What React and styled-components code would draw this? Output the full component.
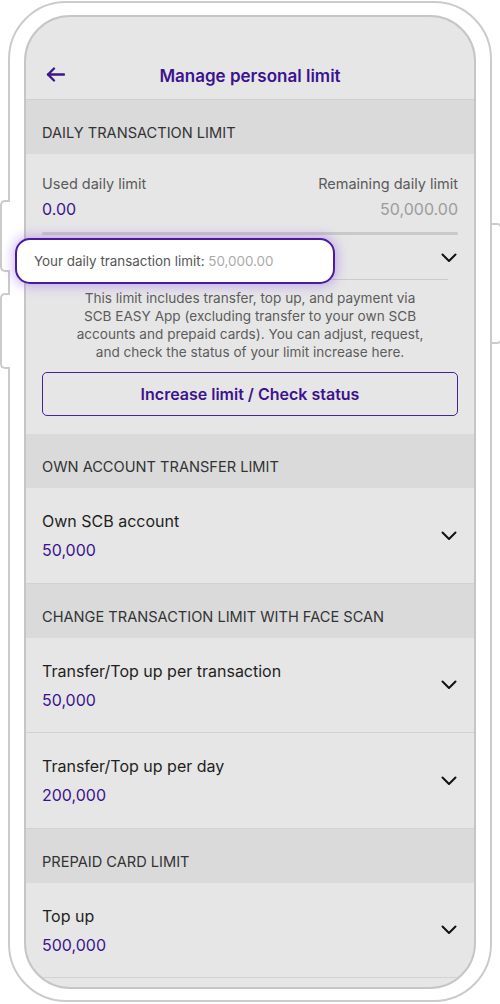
import React from 'react';
import styled, { createGlobalStyle } from 'styled-components';

const GlobalStyle = createGlobalStyle`
    html, body {
        margin: 0;
        padding: 0;
        background: #ffffff;
    }
    body {
        font-family: Inter, 'Noto Sans', Arial, sans-serif;
        -webkit-font-smoothing: antialiased;
    }
`

const Page = styled.div`
    width: 500px;
    height: 1004px;
    padding: 1px 8px 0;
    box-sizing: border-box;
    overflow: hidden;
`

const Device = styled.div`
    position: relative;
    width: 484px;
    height: 1001px;
    box-sizing: border-box;
    border: 2px solid #cbcbcb;
    border-radius: 58px;
    background: #ffffff;
    padding: 12px 14px 11px;
`

const SideButton = styled.div`
    position: absolute;
    top: ${p => p.top}px;
    height: ${p => p.h}px;
    width: 10px;
    box-sizing: border-box;
    background: #ffffff;
    border: 2px solid #cbcbcb;
    ${p => p.right ? `
        right: -12px;
        border-left: none;
        border-radius: 0 5px 5px 0;
    ` : `
        left: -10px;
        border-right: none;
        border-radius: 5px 0 0 5px;
    `}
`

const Screen = styled.div`
    height: 100%;
    box-sizing: border-box;
    border: 2px solid #c6c6c6;
    border-radius: 46px;
    background: #e6e6e6;
    overflow: hidden;
    display: flex;
    flex-direction: column;
`

const Header = styled.div`
    height: 83px;
    flex-shrink: 0;
    display: flex;
    align-items: flex-end;
    justify-content: center;
    position: relative;
    padding-bottom: 12px;
    box-sizing: border-box;
    border-bottom: 1px solid #cfcfcf;
`

const BackButton = styled.div`
    position: absolute;
    left: 20px;
    bottom: 17px;
    display: flex;
`

const Title = styled.h1`
    margin: 0;
    font-size: 17px;
    line-height: 22px;
    font-weight: 600;
    color: #3c138f;
`

const SectionHeader = styled.div`
    height: 54px;
    flex-shrink: 0;
    box-sizing: border-box;
    padding: 25px 16px 0;
    background: #dadadb;
    font-size: 14.6px;
    line-height: 16px;
    color: #333333;
    text-transform: uppercase;
`

const DailyBody = styled.div`
    padding: 21px 16px 18px;
    display: flex;
    flex-direction: column;
`

const Split = styled.div`
    display: flex;
    justify-content: space-between;
    align-items: flex-start;
`

const Stat = styled.div`
    display: flex;
    flex-direction: column;
    align-items: ${p => p.end ? 'flex-end' : 'flex-start'};
    gap: 6px;
`

const StatLabel = styled.span`
    font-size: 14.5px;
    line-height: 18px;
    color: #5a5a5a;
`

const StatValue = styled.span`
    font-size: 16px;
    line-height: 20px;
    color: ${p => p.muted ? '#9c9c9c' : '#3c138f'};
`

const Bar = styled.div`
    margin-top: 13px;
    height: 3px;
    border-radius: 2px;
    background: #c9c9c9;
`

const LimitRow = styled.div`
    margin-top: 1px;
    height: 43px;
    display: flex;
    align-items: center;
    justify-content: flex-end;
    border-bottom: 1px solid #cbcbcb;
    margin-right: 10px;
`

const ChevronSlot = styled.div`
    display: flex;
    margin-right: ${p => p.shift || 0}px;
`

const Description = styled.p`
    margin: 9px 0 0;
    text-align: center;
    font-size: 13.6px;
    line-height: 18px;
    color: #5c5c5c;
    white-space: nowrap;
`

const OutlineButton = styled.button`
    margin-top: 11px;
    height: 44px;
    width: 100%;
    background: transparent;
    border: 1.5px solid #4a1fa0;
    border-radius: 5px;
    font-family: inherit;
    font-size: 16px;
    font-weight: 600;
    color: #3c138f;
    cursor: pointer;
`

const Row = styled.div`
    display: flex;
    align-items: center;
    justify-content: space-between;
    padding: 23px 17px 22.5px 16px;
    border-bottom: 1px solid #d2d2d2;
`

const RowText = styled.div`
    display: flex;
    flex-direction: column;
    gap: 9px;
`

const RowLabel = styled.span`
    font-size: 16px;
    line-height: 20px;
    color: #1f1f1f;
`

const RowValue = styled.span`
    font-size: 16px;
    line-height: 20px;
    color: #3c138f;
`

const Callout = styled.div`
    position: absolute;
    left: 5px;
    top: 235px;
    width: 320px;
    height: 46px;
    box-sizing: border-box;
    display: flex;
    align-items: center;
    padding-left: 17px;
    background: #ffffff;
    border: 2px solid #4a1aa0;
    border-radius: 15px;
    box-shadow: 0 0 12px 2px rgba(150, 90, 235, 0.45);
    font-size: 13.4px;
    color: #555555;
    span {
        color: #aaaaaa;
    }
`

const Chevron = () => (
    <svg width="16" height="10" viewBox="0 0 16 10" fill="none">
        <polyline points="1.5,1.5 8,8 14.5,1.5" stroke="#111" strokeWidth="2" strokeLinecap="round" strokeLinejoin="round" />
    </svg>
)

const BackArrow = () => (
    <svg width="19" height="15" viewBox="0 0 19 15" fill="none">
        <line x1="18" y1="7.5" x2="2" y2="7.5" stroke="#3c138f" strokeWidth="2.3" strokeLinecap="round" />
        <polyline points="8,1.5 2,7.5 8,13.5" stroke="#3c138f" strokeWidth="2.3" strokeLinecap="round" strokeLinejoin="round" />
    </svg>
)

const descriptionLines = [
    'This limit includes transfer, top up, and payment via',
    'SCB EASY App (excluding transfer to your own SCB',
    'accounts and prepaid cards). You can adjust, request,',
    'and check the status of your limit increase here.',
]

const sections = [
    {
        title: 'Own account transfer limit',
        rows: [{ label: 'Own SCB account', value: '50,000' }],
    },
    {
        title: 'Change transaction limit with face scan',
        rows: [
            { label: 'Transfer/Top up per transaction', value: '50,000' },
            { label: 'Transfer/Top up per day', value: '200,000' },
        ],
    },
    {
        title: 'Prepaid card limit',
        rows: [{ label: 'Top up', value: '500,000' }],
    },
]

export default function App() {
    return (
        <Page>
            <GlobalStyle />
            <Device>
                <SideButton top={197} h={72} />
                <SideButton top={290} h={76} />
                <SideButton right top={220} h={121} />
                <Screen>
                    <Header>
                        <BackButton><BackArrow /></BackButton>
                        <Title>Manage personal limit</Title>
                    </Header>
                    <SectionHeader>Daily transaction limit</SectionHeader>
                    <DailyBody>
                        <Split>
                            <Stat>
                                <StatLabel>Used daily limit</StatLabel>
                                <StatValue>0.00</StatValue>
                            </Stat>
                            <Stat end>
                                <StatLabel>Remaining daily limit</StatLabel>
                                <StatValue muted>50,000.00</StatValue>
                            </Stat>
                        </Split>
                        <Bar />
                        <LimitRow>
                            <ChevronSlot shift={-9}><Chevron /></ChevronSlot>
                        </LimitRow>
                        <Description>
                            {descriptionLines.map((line, i) => (
                                <React.Fragment key={i}>
                                    {line}
                                    {i < descriptionLines.length - 1 && <br />}
                                </React.Fragment>
                            ))}
                        </Description>
                        <OutlineButton>Increase limit / Check status</OutlineButton>
                    </DailyBody>
                    {sections.map(section => (
                        <React.Fragment key={section.title}>
                            <SectionHeader>{section.title}</SectionHeader>
                            {section.rows.map(row => (
                                <Row key={row.label}>
                                    <RowText>
                                        <RowLabel>{row.label}</RowLabel>
                                        <RowValue>{row.value}</RowValue>
                                    </RowText>
                                    <ChevronSlot><Chevron /></ChevronSlot>
                                </Row>
                            ))}
                        </React.Fragment>
                    ))}
                </Screen>
                <Callout>
                    Your daily transaction limit:&nbsp;<span>50,000.00</span>
                </Callout>
            </Device>
        </Page>
    )
}
